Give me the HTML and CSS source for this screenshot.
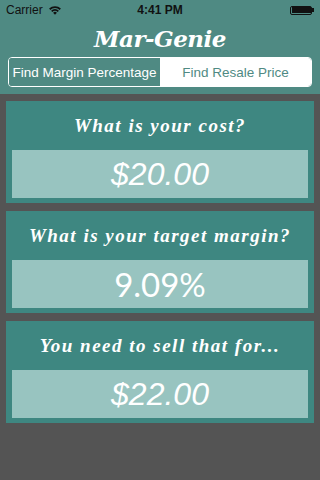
FILE: index.html
```html
<!DOCTYPE html>
<html>
<head>
<meta charset="utf-8">
<link rel="stylesheet" href="styles.css">
</head>
<body>
<div class="app">
  <header class="header">
    <div class="status">
      <div class="status-left">
        <span class="carrier">Carrier</span>
        <svg class="wifi" width="14" height="10" viewBox="0 0 13 10">
          <path d="M0.6 3.6 A8.5 8.5 0 0 1 12.4 3.6 L11.2 4.9 A6.8 6.8 0 0 0 1.8 4.9 Z" fill="#111"/>
          <path d="M2.6 5.7 A5.6 5.6 0 0 1 10.4 5.7 L9.2 7 A3.9 3.9 0 0 0 3.8 7 Z" fill="#111"/>
          <path d="M4.6 7.8 A2.7 2.7 0 0 1 8.4 7.8 L6.5 9.8 Z" fill="#111"/>
        </svg>
      </div>
      <div class="time">4:41 PM</div>
      <div class="status-right">
        <div class="battery"><div class="battery-fill"></div></div>
        <div class="battery-tip"></div>
      </div>
    </div>
    <h1 class="title">Mar-Genie</h1>
    <div class="segment">
      <div class="seg seg-on">Find Margin Percentage</div>
      <div class="seg seg-off">Find Resale Price</div>
    </div>
  </header>
  <main class="content">
    <section class="card">
      <div class="label">What is your cost?</div>
      <div class="field money">$20.00</div>
    </section>
    <section class="card">
      <div class="label">What is your target margin?</div>
      <div class="field pct">9.09%</div>
    </section>
    <section class="card">
      <div class="label">You need to sell that for...</div>
      <div class="field money">$22.00</div>
    </section>
  </main>
</div>
</body>
</html>
```
FILE: styles.css
```css
* { box-sizing: border-box; margin: 0; padding: 0; }
html, body { width: 320px; height: 480px; overflow: hidden; }
body { background: #545454; font-family: "Liberation Sans", Arial, sans-serif; }
.app { width: 320px; height: 480px; background: #545454; }
.header { background: #4f8a83; height: 94px; padding: 0 8px; display: flex; flex-direction: column; }
.status { height: 20px; display: flex; align-items: center; justify-content: space-between; margin: 0 -2px; font-size: 12px; color: #111; }
.status-left { width: 80px; display: flex; align-items: center; gap: 5px; }
.time { font-weight: bold; font-size: 12px; }
.status-right { width: 80px; display: flex; justify-content: flex-end; align-items: center; }
.battery { width: 22px; height: 9px; border: 1px solid #111; border-radius: 2px; padding: 0.5px; }
.battery-fill { width: 100%; height: 100%; background: #111; }
.battery-tip { width: 1.5px; height: 4px; background: #111; }
.title { height: 37px; text-align: center; color: #fff; font-family: "DejaVu Serif", serif; font-style: italic; font-weight: bold; font-size: 23px; line-height: 37px; letter-spacing: -0.5px; }
.segment { height: 30px; display: flex; border: 1px solid #fff; border-radius: 4px; overflow: hidden; }
.seg { flex: 1; display: flex; align-items: center; justify-content: center; font-size: 13.5px; white-space: nowrap; }
.seg-on { background: #4f8a83; color: #fff; }
.seg-off { background: #fff; color: #4f8a83; }
.content { padding: 7px 6px 0; display: flex; flex-direction: column; gap: 8px; }
.card { background: #3e8781; height: 102px; padding: 0 6px 5px; display: flex; flex-direction: column; }
.label { height: 49px; display: flex; align-items: center; justify-content: center; color: #fff; font-family: "Liberation Serif", "Times New Roman", serif; font-style: italic; font-weight: bold; font-size: 19px; letter-spacing: 1.5px; padding-top: 1px; white-space: nowrap; }
.field { flex: 1; background: #98c4c0; color: #fff; display: flex; align-items: center; justify-content: center; font-size: 32px; }
.money { font-family: "Liberation Sans", Arial, sans-serif; font-style: italic; }
.pct { font-family: Lato, sans-serif; font-weight: 400; font-size: 33px; }
```
